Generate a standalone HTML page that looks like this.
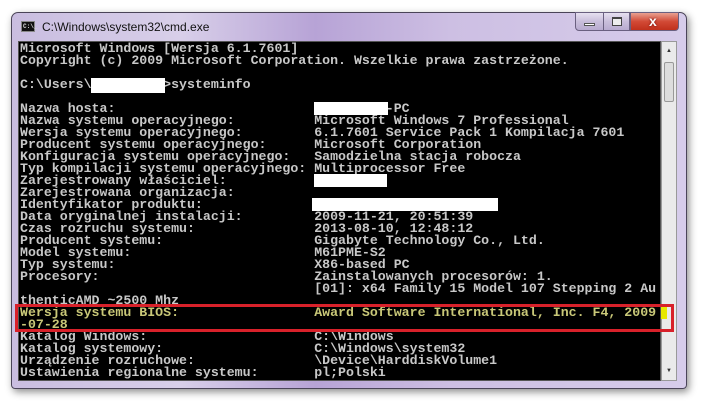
<!DOCTYPE html>
<html><head><meta charset="utf-8"><style>
*{margin:0;padding:0;box-sizing:border-box}
body{width:701px;height:404px;background:#fff;position:relative;overflow:hidden;font-family:"Liberation Sans",sans-serif}
.win{position:absolute;left:11px;top:12px;width:676px;height:377px;border-radius:7px 7px 4px 4px;border:1px solid #4a4458;
background:linear-gradient(90deg,#c9bde0 0%,#d8cfe9 25%,#b7a3d6 45%,#cdbfe3 65%,#d6ccea 100%);box-shadow:2px 3px 8px rgba(0,0,0,.45)}
.title{position:absolute;left:42px;top:20px;font-size:12px;color:#111}
.ico{position:absolute;left:21px;top:21px;width:14px;height:11px;background:#111;border:1px solid #888;color:#ddd;font:bold 6px "Liberation Mono",monospace;line-height:9px;padding-left:1px}
.b{position:absolute;top:12px;height:19px;border:1px solid #6a6080;background:linear-gradient(#e6e0f0,#c9bedb 50%,#b8abd0)}
.con{position:absolute;left:18px;top:41px;width:643px;height:340px;background:#000;border:1px solid #555}
.sb{position:absolute;left:661px;top:41px;width:16px;height:340px;background:#eaeaea;border:1px solid #999}
.l{position:absolute;left:20px;font-family:"Liberation Mono",monospace;font-size:13.25px;line-height:12px;color:#c8c8c8;white-space:pre;font-weight:bold;letter-spacing:0}
.y{color:#c9c878}
.w{position:absolute;background:#fff}
.red{position:absolute;left:15px;top:304px;width:659px;height:28px;border:3px solid #d8212a}
</style></head><body>
<div class="win"></div>
<div class="ico">C:\_</div>
<div class="title">C:\Windows\system32\cmd.exe</div>
<div class="b" style="left:575px;width:29px;border-radius:0 0 0 4px"><div style="position:absolute;left:8px;top:10px;width:11px;height:3px;background:#fff;border:1px solid #555"></div></div>
<div class="b" style="left:603px;width:27px"><div style="position:absolute;left:8px;top:4px;width:10px;height:9px;border:1px solid #444;border-top-width:2px;background:#eee"></div></div>
<div class="b" style="left:630px;width:49px;border-radius:0 0 4px 0;background:linear-gradient(#e8a090,#d24a36 50%,#c0301c)"><div style="position:absolute;left:18px;top:0;color:#fff;font:bold 14px 'Liberation Sans';text-shadow:0 0 2px #600">x</div></div>
<div class="con"></div>
<div class="sb"><div style="position:absolute;left:2px;top:20px;width:10px;height:40px;background:#ddd;border:1px solid #999;border-radius:2px"></div>
<div style="position:absolute;left:4px;top:6px;font-size:6px;color:#333">▲</div><div style="position:absolute;left:4px;top:326px;font-size:6px;color:#333">▼</div></div>
<div class="l" style="top:43px">Microsoft Windows [Wersja 6.1.7601]
Copyright (c) 2009 Microsoft Corporation. Wszelkie prawa zastrzeżone.

C:\Users\         >systeminfo

Nazwa hosta:                         <span style="visibility:hidden">abcdefghi</span>-PC
Nazwa systemu operacyjnego:          Microsoft Windows 7 Professional
Wersja systemu operacyjnego:         6.1.7601 Service Pack 1 Kompilacja 7601
Producent systemu operacyjnego:      Microsoft Corporation
Konfiguracja systemu operacyjnego:   Samodzielna stacja robocza
Typ kompilacji systemu operacyjnego: Multiprocessor Free
Zarejestrowany właściciel:
Zarejestrowana organizacja:
Identyfikator produktu:
Data oryginalnej instalacji:         2009-11-21, 20:51:39
Czas rozruchu systemu:               2013-08-10, 12:48:12
Producent systemu:                   Gigabyte Technology Co., Ltd.
Model systemu:                       M61PME-S2
Typ systemu:                         X86-based PC
Procesory:                           Zainstalowanych procesorów: 1.
                                     [01]: x64 Family 15 Model 107 Stepping 2 Au
thenticAMD ~2500 Mhz
<span class="y">Wersja systemu BIOS:                 Award Software International, Inc. F4, 2009
-07-28</span>
Katalog Windows:                     C:\Windows
Katalog systemowy:                   C:\Windows\system32
Urządzenie rozruchowe:               \Device\HarddiskVolume1
Ustawienia regionalne systemu:       pl;Polski</div>
<div class="w" style="left:91px;top:78px;width:74px;height:15px"></div>
<div class="w" style="left:314px;top:102px;width:74px;height:13px"></div>
<div class="w" style="left:314px;top:174px;width:73px;height:13px"></div>
<div class="w" style="left:312px;top:198px;width:186px;height:13px"></div>
<div style="position:absolute;left:661px;top:307px;width:6px;height:12px;background:#e8e800"></div>
<div class="red"></div>
</body></html>
